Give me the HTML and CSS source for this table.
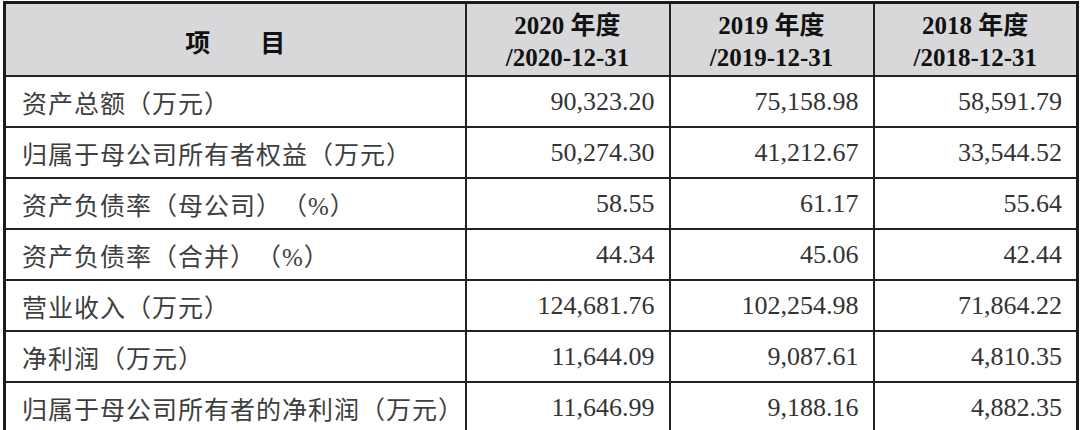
FILE: index.html
```html
<!DOCTYPE html>
<html lang="zh-CN">
<head>
<meta charset="utf-8">
<link rel="stylesheet" href="styles.css">
</head>
<body>
<table class="fin">
  <colgroup>
    <col class="c-label">
    <col class="c-num">
    <col class="c-num">
    <col class="c-num">
  </colgroup>
  <thead>
    <tr class="head">
      <th class="h-item">项　　目</th>
      <th>2020 年度<br>/2020-12-31</th>
      <th>2019 年度<br>/2019-12-31</th>
      <th>2018 年度<br>/2018-12-31</th>
    </tr>
  </thead>
  <tbody>
    <tr><td class="label">资产总额（万元）</td><td>90,323.20</td><td>75,158.98</td><td>58,591.79</td></tr>
    <tr><td class="label">归属于母公司所有者权益（万元）</td><td>50,274.30</td><td>41,212.67</td><td>33,544.52</td></tr>
    <tr><td class="label">资产负债率（母公司）（%）</td><td>58.55</td><td>61.17</td><td>55.64</td></tr>
    <tr><td class="label">资产负债率（合并）（%）</td><td>44.34</td><td>45.06</td><td>42.44</td></tr>
    <tr><td class="label">营业收入（万元）</td><td>124,681.76</td><td>102,254.98</td><td>71,864.22</td></tr>
    <tr><td class="label">净利润（万元）</td><td>11,644.09</td><td>9,087.61</td><td>4,810.35</td></tr>
    <tr><td class="label">归属于母公司所有者的净利润（万元）</td><td>11,646.99</td><td>9,188.16</td><td>4,882.35</td></tr>
  </tbody>
</table>
</body>
</html>
```
FILE: styles.css
```css
html, body {
  margin: 0;
  padding: 0;
  background: #ffffff;
}

body {
  padding: 1px 0 0 3px;
}

.fin {
  border-collapse: collapse;
  table-layout: fixed;
  width: 1075px;
  border: 3px solid #1c1c1c;
  font-family: "Liberation Serif", "Noto Sans CJK SC", serif;
  text-spacing-trim: space-all;
}

.c-label { width: 461px; }
.c-num { width: 204px; }

.fin th,
.fin td {
  border: 2px solid #222222;
  padding: 0;
}

.head th {
  height: 66px;
  background: #d8d8da;
  color: #111111;
  font-weight: bold;
  font-size: 25px;
  line-height: 32px;
  text-align: center;
  padding-top: 5px;
  vertical-align: middle;
}

.head .h-item {
  font-family: "Noto Sans CJK SC", sans-serif;
  font-weight: 700;
  padding-top: 2px;
}

.fin td {
  height: 49px;
  font-size: 26px;
  color: #333333;
  text-align: right;
  padding-right: 14px;
  vertical-align: middle;
}

.fin td.label {
  text-align: left;
  padding-left: 16px;
  padding-right: 0;
  font-size: 25px;
  letter-spacing: 1px;
  color: #3e3e3e;
  white-space: nowrap;
}
```
